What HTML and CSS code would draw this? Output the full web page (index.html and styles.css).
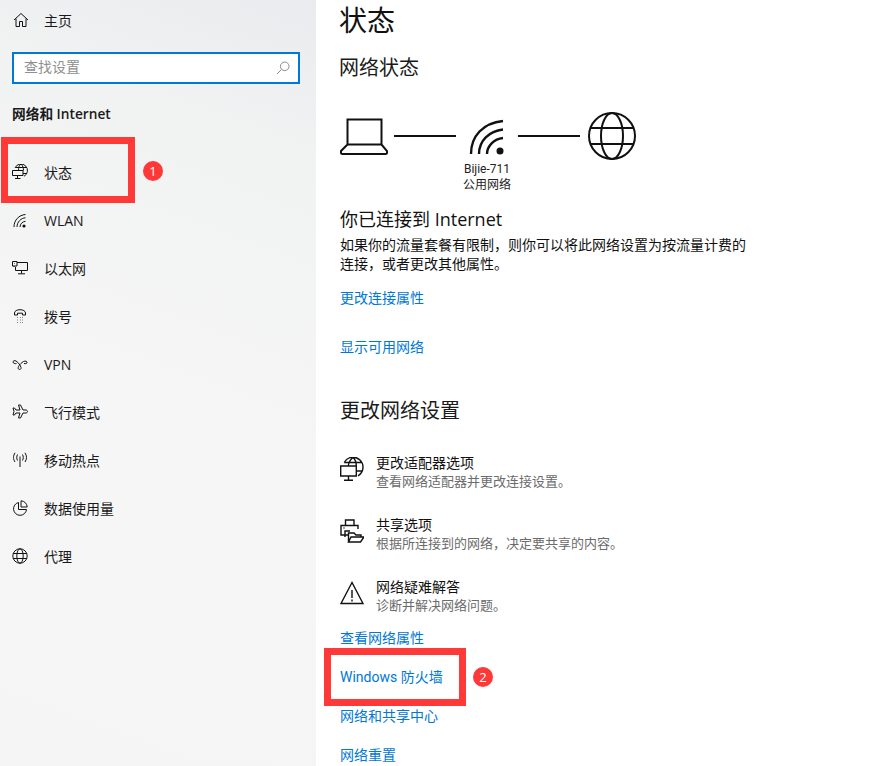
FILE: index.html
```html
<!DOCTYPE html>
<html lang="zh-CN">
<head>
<meta charset="utf-8">
<title>状态</title>
<link rel="stylesheet" href="styles.css">
</head>
<body>
<div class="page">
  <aside class="side">
    <div class="home">
      <svg class="ic" viewBox="0 0 16 16"><path d="M1 8 8 1.500 15 8M3 6.500V14.500H6.500V9.500H9.500V14.500H13V6.500"/></svg>
      <span>主页</span>
    </div>
    <div class="search">
      <span class="ph">查找设置</span>
      <svg class="search-ic" viewBox="0 0 14 14"><circle cx="8.700" cy="5.300" r="4.300"/><path d="M5.600 8.400 1 13"/></svg>
    </div>
    <h2 class="group">网络和 Internet</h2>
    <nav class="nav">
      <div class="item">
        <svg class="ic" viewBox="0 1 16 16"><path d="M3.230 4.500A6.500 6.500 0 1 1 12 13.270M9 1C7 2.500 6.500 4.500 6.500 7.500M9 1C11 3 11.500 5 11.500 7.500M3.230 4.500H14.770M11 10.500H14.770"/><path d="M.5 7.500H11V12.500H.5ZM5.500 12.500V15M3 15.500H8.500"/></svg>
        <span>状态</span>
      </div>
      <div class="item">
        <svg class="ic" viewBox="0 0 16 16"><path d="M2 15C2 8 7 3 13.500 2.500M5 15C5 10 9 6 13.500 5.800M8 15C8 12 10.500 9.500 13.500 9.300"/><circle class="dot" cx="12" cy="14" r="1.600"/></svg>
        <span>WLAN</span>
      </div>
      <div class="item">
        <svg class="ic" viewBox="0 0 16 16"><path d="M5 2.500H15.500V10.500H3.500V7M.5 1.500H5V6H.5ZM2 6V7M2.500 3.500H3M9.500 10.500V13.500M6 13.800H13"/></svg>
        <span>以太网</span>
      </div>
      <div class="item">
        <svg class="ic" viewBox="0 0 16 16"><path d="M2.500 7V5C2.500 3 5 1.700 8 1.700S13.500 3 13.500 5V7H10.500V5.200H5.500V7Z"/><path class="dots" d="M5.500 9.500H6M8 9.500H8.500M10.500 9.500H11M5.500 12H6M8 12H8.500M10.500 12H11M5.500 14.500H6M8 14.500H8.500M10.500 14.500H11"/></svg>
        <span>拨号</span>
      </div>
      <div class="item">
        <svg class="ic" viewBox="0 0 16 16"><path d="M4.500 7.500C3 8 1 7.200 1 6S2.500 4.200 4 5C6.500 6.500 8.500 9.500 9 11.500S7.500 14 6.500 13 6.500 9.500 10 6.500C11.500 5 14.500 4.500 15 6S13.500 8 12 7.500"/></svg>
        <span>VPN</span>
      </div>
      <div class="item">
        <svg class="ic" viewBox="0 0 16 16"><path d="M6.500 1H8.500L11 6H14C15 6 15.500 7 15.500 7.500S15 9 14 9H11L8.500 14H6.500L8 9H4L2.500 11H1L2 7.500 1 4H2.500L4 6H8Z"/></svg>
        <span>飞行模式</span>
      </div>
      <div class="item">
        <svg class="ic" viewBox="0 0 16 16"><path d="M8 4.500V15M5.500 2.500C4.500 4.500 4.500 6.500 5.500 8.500M3 .8C1 4 1 7 3 10M10.500 2.500C11.500 4.500 11.500 6.500 10.500 8.500M13 .8C15 4 15 7 13 10"/></svg>
        <span>移动热点</span>
      </div>
      <div class="item">
        <svg class="ic" viewBox="0 0 16 16"><path d="M6.500 2.500A6.500 6.500 0 1 0 14.500 9.500H6.500Z"/><path d="M9 .8A6.500 6.500 0 0 1 15.200 7H9Z"/></svg>
        <span>数据使用量</span>
      </div>
      <div class="item">
        <svg class="ic" viewBox="0 0 16 16"><circle cx="8" cy="8" r="7.200"/><ellipse cx="8" cy="8" rx="3.200" ry="7.200"/><path d="M1.200 5.500H14.800M1.200 10.500H14.800"/></svg>
        <span>代理</span>
      </div>
    </nav>
  </aside>

  <main class="main">
    <h1 class="title">状态</h1>
    <h2 class="sub">网络状态</h2>
    <div class="diagram">
      <svg class="d-laptop" viewBox="0 0 48 52"><path d="M7.500 9.500H41.500V34.500H7.500ZM7.500 34.500 1 41V43C1 43.800 1.500 44 2.500 44H45.500C46.500 44 47 43.800 47 43V41L41.500 34.500"/></svg>
      <span class="d-line"></span>
      <div class="d-node">
        <svg class="d-wifi" viewBox="0 0 62 52"><path d="M15 44C15 26 27 13 47 11M23 44C23 31 33 21 47 19.500M31 44C31 36 38 29 47 28"/><circle class="dot" cx="44" cy="41" r="3.500"/></svg>
        <div class="cap tight">Bijie-711</div>
        <div class="cap">公用网络</div>
      </div>
      <span class="d-line d-line-next"></span>
      <svg class="d-globe" viewBox="0 0 48 52"><circle cx="24" cy="26" r="23"/><ellipse cx="24" cy="26" rx="11" ry="23"/><path d="M2 18H46M2 34H46"/></svg>
    </div>
    <h3 class="conn">你已连接到 Internet</h3>
    <p class="para">如果你的流量套餐有限制，则你可以将此网络设置为按流量计费的<br>连接，或者更改其他属性。</p>
    <a class="link l1">更改连接属性</a>
    <a class="link l2">显示可用网络</a>
    <h2 class="sub s2">更改网络设置</h2>

    <div class="opt">
      <svg class="opt-ic" viewBox="0 0 24 24"><path d="M4.170 5.500A10 10 0 1 1 18 18.860M13 .5C10 3 8.500 5.500 8.300 9M13 .5C15.500 2.500 16.300 6 16.300 9M4.170 5.500H21.830M16.300 14H22.250"/><path d="M.7 9H16.300V19H.7ZM8.500 19V23M4 23.300H13"/></svg>
      <div><div class="opt-t">更改适配器选项</div><div class="opt-d">查看网络适配器并更改连接设置。</div></div>
    </div>
    <div class="opt">
      <svg class="opt-ic" viewBox="0 0 24 24"><path d="M5.500 6V1H14V6M8 16H1V6.500H18V10M5 18V12H10"/><path d="M8.500 23V14H14L16 16H21V18M8.500 23 11 18H24L20.500 23ZM3.500 9H4.500"/></svg>
      <div><div class="opt-t">共享选项</div><div class="opt-d">根据所连接到的网络，决定要共享的内容。</div></div>
    </div>
    <div class="opt opt-last">
      <svg class="opt-ic" viewBox="0 0 24 24"><path d="M12 1.500 1 22.500H23ZM12 9V17M12 18.500V20.500"/></svg>
      <div><div class="opt-t">网络疑难解答</div><div class="opt-d">诊断并解决网络问题。</div></div>
    </div>
    <div class="links">
      <a class="link">查看网络属性</a>
      <a class="link"><span class="tight">Windows</span> 防火墙</a>
      <a class="link">网络和共享中心</a>
      <a class="link">网络重置</a>
    </div>
  </main>

  <div class="mark m1"></div>
  <div class="badge b1">1</div>
  <div class="mark m2"></div>
  <div class="badge b2">2</div>
</div>
</body>
</html>
```

FILE: styles.css
```css
* { box-sizing: border-box; }
html, body { margin: 0; padding: 0; background: #fff; }
body {
  font-family: "Open Sans", "Noto Sans CJK SC", sans-serif;
  font-size: 14px;
  color: #1a1a1a;
}
.page {
  position: relative;
  display: flex;
  width: 892px;
  height: 766px;
  overflow: hidden;
}
.tight { font-family: Roboto, "Noto Sans CJK SC", sans-serif; }
svg { fill: none; stroke: #111; stroke-width: 1; display: block; flex: none; }
svg .dot { fill: #111; stroke: none; }

/* Sidebar */
.side {
  width: 316px;
  flex: none;
  background: linear-gradient(200deg, #e9ebee 0, #f1f2f2 18%, #f6f6f6 55%, #f5f5f5 100%);
}
.home {
  display: flex;
  align-items: center;
  height: 41px;
  padding: 0 0 2px 13px;
}
.ic { width: 16px; height: 16px; margin-right: 15px; }
.search {
  display: flex;
  align-items: center;
  justify-content: space-between;
  width: 288px;
  height: 32px;
  margin: 11px 0 0 12px;
  padding: 0 8px 4px 10px;
  background: #fff;
  border: 2px solid #0078d7;
}
.ph { color: #8f8f8f; font-size: 14px; }
.search-ic { width: 14px; height: 14px; stroke: #8c8c8c; margin-top: 4px; }
.group {
  margin: 20px 0 0 12px;
  font-size: 13.700px;
  line-height: 20px;
  font-weight: 600;
}
.nav { margin-top: 24px; }
.item {
  display: flex;
  align-items: center;
  height: 48px;
  padding-left: 12px;
}
.item .ic { margin-right: 16px; }

/* Main */
.main { flex: 1; padding-left: 24px; min-width: 0; }
.title {
  margin: 0 0 0 -1px;
  font-size: 28px;
  line-height: 40px;
  font-weight: 400;
  color: #111;
}
.sub {
  margin: 13px 0 0 -1px;
  font-size: 20px;
  line-height: 30px;
  font-weight: 400;
  color: #1a1a1a;
}
.s2 { margin: 39px 0 0; }
.diagram { display: flex; align-items: flex-start; margin-top: 27px; height: 84px; }
.d-laptop { width: 48px; height: 52px; stroke-width: 2; }
.d-line { width: 62px; height: 2px; background: #111; margin: 25px 0 0 6px; }
.d-line-next { margin-left: 0; }
.d-node { width: 62px; flex: none; }
.d-wifi { width: 62px; height: 52px; stroke-width: 2.400; }
.d-globe { width: 48px; height: 52px; margin-left: 8px; stroke-width: 2; }
.cap {
  font-size: 12px;
  line-height: 15px;
  text-align: center;
  white-space: nowrap;
  color: #222;
}
.conn {
  margin: 12px 0 0;
  font-size: 18px;
  line-height: 26px;
  font-weight: 400;
  color: #111;
}
.para {
  margin: 3px 0 0;
  font-size: 14px;
  line-height: 19px;
  color: #111;
}
.link {
  display: block;
  color: #0078d7;
  font-size: 14px;
  line-height: 20px;
}
.l1 { margin-top: 15px; }
.l2 { margin-top: 29px; }
.opt {
  display: flex;
  align-items: flex-start;
  height: 62px;
}
.opt-last { height: 50px; }
.s2 + .opt { margin-top: 28px; }
.opt-ic { width: 24px; height: 24px; margin: 3px 12px 0 0; stroke-width: 1.400; }
.opt-t { font-size: 14px; line-height: 18px; color: #111; }
.opt-d { font-size: 13px; line-height: 18px; color: #6b6b6b; }
.links { margin-top: 0; }
.links .link { height: 39px; line-height: 20px; }

/* Annotations lying over the screenshot */
.mark { position: absolute; border: 7px solid #ff3838; }
.m1 { left: 1px; top: 137px; width: 134px; height: 66px; }
.m2 { left: 324px; top: 648px; width: 142px; height: 58px; }
.badge {
  position: absolute;
  width: 20px;
  height: 20px;
  border-radius: 50%;
  background: #ff3838;
  color: #fff;
  font-size: 13px;
  line-height: 20px;
  text-align: center;
}
.b1 { left: 143px; top: 161px; }
.b2 { left: 473px; top: 667px; }
```
